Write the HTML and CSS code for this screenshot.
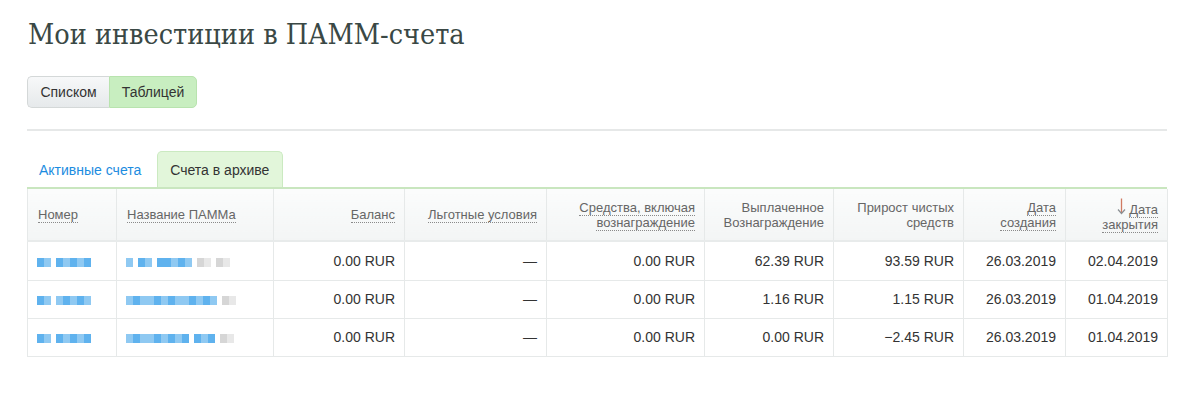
FILE: index.html
```html
<!DOCTYPE html>
<html lang="ru">
<head>
<meta charset="utf-8">
<link rel="stylesheet" href="styles.css">
</head>
<body>
<div class="page">
  <h1 class="title">Мои инвестиции в ПАММ-счета</h1>
  <div class="btn-group">
    <button class="btn">Списком</button>
    <button class="btn btn-active">Таблицей</button>
  </div>
  <div class="divider"></div>
  <div class="tabs">
    <a class="tab">Активные счета</a>
    <span class="tab tab-active">Счета в архиве</span>
  </div>
  <table class="grid">
    <colgroup>
      <col style="width:89px"><col style="width:157px"><col style="width:131px"><col style="width:142px"><col style="width:158px"><col style="width:129px"><col style="width:130px"><col style="width:102px"><col style="width:102px">
    </colgroup>
    <thead>
      <tr>
        <th class="l"><span class="dot">Номер</span></th>
        <th class="l"><span class="dot">Название ПАММа</span></th>
        <th><span class="dot">Баланс</span></th>
        <th><span class="dot">Льготные условия</span></th>
        <th><span class="dot">Средства, включая вознаграждение</span></th>
        <th>Выплаченное Вознаграждение</th>
        <th>Прирост чистых средств</th>
        <th><span class="dot">Дата создания</span></th>
        <th><svg class="arrow" width="9" height="17" viewBox="0 0 9 17"><path d="M4.5 0.5V15" stroke="#d07a62" stroke-width="1.3" fill="none"/><path d="M1 11.5L4.5 15.5L8 11.5" stroke="#8a8f93" stroke-width="1.2" fill="none"/></svg> <span class="dot">Дата закрытия</span></th>
      </tr>
    </thead>
    <tbody>
      <tr>
        <td class="l"><span class="px"><i class="b2"></i><i class="b1"></i><i class="gap"></i><i class="b2"></i><i class="b1"></i><i class="b2"></i><i class="b1"></i><i class="b2"></i></span></td>
        <td class="l"><span class="px"><i class="b1"></i><i class="gap"></i><i class="b2"></i><i class="b1"></i><i class="gap"></i><i class="b2"></i><i class="b2"></i><i class="b1"></i><i class="b2"></i><i class="b1"></i><i class="gap"></i><i class="g1"></i><i class="g2"></i><i class="gap"></i><i class="g1"></i><i class="g2"></i></span></td>
        <td>0.00 RUR</td>
        <td class="dash">—</td>
        <td>0.00 RUR</td>
        <td>62.39 RUR</td>
        <td>93.59 RUR</td>
        <td>26.03.2019</td>
        <td>02.04.2019</td>
      </tr>
      <tr>
        <td class="l"><span class="px"><i class="b2"></i><i class="b1"></i><i class="gap"></i><i class="b1"></i><i class="b2"></i><i class="b1"></i><i class="b2"></i><i class="b1"></i></span></td>
        <td class="l"><span class="px"><i class="b1"></i><i class="b2"></i><i class="b1"></i><i class="b1"></i><i class="b2"></i><i class="b1"></i><i class="b2"></i><i class="b1"></i><i class="b1"></i><i class="b2"></i><i class="b1"></i><i class="b2"></i><i class="b1"></i><i class="gap"></i><i class="g1"></i><i class="g2"></i></span></td>
        <td>0.00 RUR</td>
        <td class="dash">—</td>
        <td>0.00 RUR</td>
        <td>1.16 RUR</td>
        <td>1.15 RUR</td>
        <td>26.03.2019</td>
        <td>01.04.2019</td>
      </tr>
      <tr>
        <td class="l"><span class="px"><i class="b2"></i><i class="b1"></i><i class="gap"></i><i class="b2"></i><i class="b1"></i><i class="b2"></i><i class="b1"></i><i class="b2"></i></span></td>
        <td class="l"><span class="px"><i class="b1"></i><i class="b2"></i><i class="b1"></i><i class="b1"></i><i class="b2"></i><i class="b1"></i><i class="b2"></i><i class="b1"></i><i class="b2"></i><i class="gap"></i><i class="b2"></i><i class="b1"></i><i class="b2"></i><i class="gap"></i><i class="g1"></i><i class="g2"></i></span></td>
        <td>0.00 RUR</td>
        <td class="dash">—</td>
        <td>0.00 RUR</td>
        <td>0.00 RUR</td>
        <td>−2.45 RUR</td>
        <td>26.03.2019</td>
        <td>01.04.2019</td>
      </tr>
    </tbody>
  </table>
</div>
</body>
</html>
```
FILE: styles.css
```css
* { box-sizing: border-box; }
html, body { margin: 0; padding: 0; background: #fff; }
body { font-family: "Liberation Sans", Arial, sans-serif; color: #333; }
.page { padding: 16px 33px 0 27px; width: 1200px; }
.title {
  margin: 0 0 0 1px;
  font-family: "DejaVu Serif", "Liberation Serif", serif;
  font-stretch: condensed;
  font-weight: normal;
  font-size: 28.5px;
  line-height: 38px;
  color: #3a4845;
}
.btn-group { display: flex; margin-top: 22px; }
.btn {
  font-family: "Liberation Sans", Arial, sans-serif;
  font-size: 14px;
  color: #333;
  height: 32px;
  padding: 0 11px;
  border: 1px solid #d4d8d8;
  background: linear-gradient(#f7f8f9, #e6e9eb);
  margin: 0;
}
.btn:first-child { border-radius: 5px 0 0 5px; border-right: none; width: 82px; }
.btn-active {
  background: #c8eec0;
  border-color: #b8e3ae;
  border-radius: 0 5px 5px 0;
  width: 88px;
}
.divider { height: 2px; background: #e6e8e8; margin-top: 21px; }
.tabs {
  display: flex;
  align-items: flex-end;
  margin-top: 21px;
  height: 37px;
  border-bottom: 2px solid #c9e6bf;
}
.tab {
  font-size: 14px;
  line-height: 20px;
  padding: 8px 12px 7px;
}
a.tab { color: #1c8ce0; cursor: pointer; }
.tab-active {
  background: #e2f6da;
  border: 1px solid #cbeac1;
  border-bottom: none;
  border-radius: 5px 5px 0 0;
  color: #333;
  padding: 8px 12px 7px;
  margin-left: 4px;
  width: 126px;
}
.grid {
  width: 1140px;
  border-collapse: collapse;
  table-layout: fixed;
  font-size: 14px;
}
.grid th, .grid td { border: 1px solid #e6e9e9; text-align: right; }
.grid th {
  height: 52px;
  padding: 0 9px;
  font-weight: normal;
  font-size: 13px;
  line-height: 15px;
  color: #666;
  background: linear-gradient(#fbfcfc, #f3f5f5);
  border-bottom: 2px solid #e8ebeb;
  border-top: none;
}
.grid td { height: 38px; padding: 0 9px; color: #333; }
.grid tbody tr:first-child td { height: 39px; }
.grid .l { text-align: left; }
.grid th.l { padding-left: 10px; }
.dot { border-bottom: 1px dotted #8a8a8a; }
.arrow { vertical-align: -1px; }
.dash { color: #777; }
.px { display: inline-flex; align-items: center; height: 12px; filter: blur(0.7px); vertical-align: middle; }
.px i { display: inline-block; width: 7px; height: 9px; }
.px i.b1 { background: #8fc9f2; }
.px i.b2 { background: #5fb2ee; }
.px i.g1 { background: #d6d6d6; }
.px i.g2 { background: #e8e8e8; }
.px i.gap { width: 5px; }
```
